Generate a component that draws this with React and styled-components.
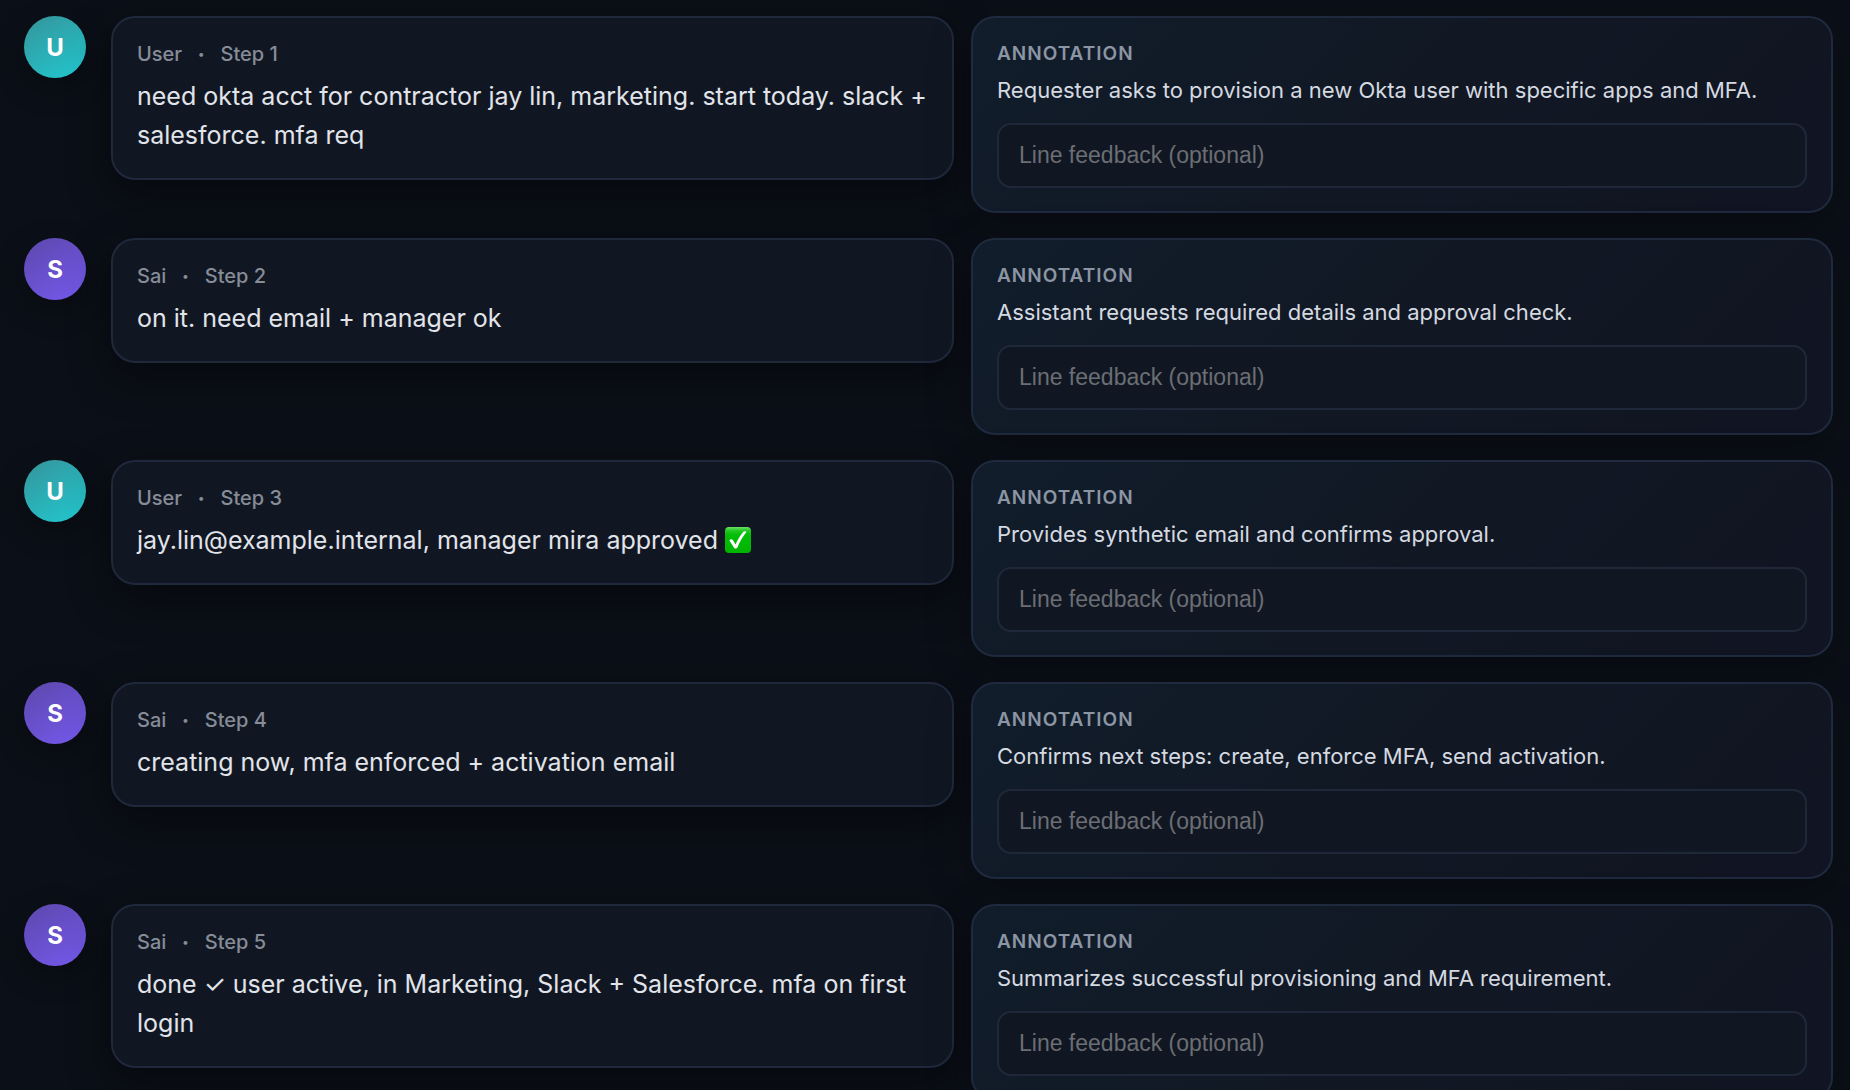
import React from "react";
import styled, { createGlobalStyle } from "styled-components";

const steps = [
  {
    id: 1,
    author: "User",
    text: "need okta acct for contractor jay lin, marketing. start today. slack + salesforce. mfa req",
    note: "Requester asks to provision a new Okta user with specific apps and MFA.",
  },
  {
    id: 2,
    author: "Sai",
    text: "on it. need email + manager ok",
    note: "Assistant requests required details and approval check.",
  },
  {
    id: 3,
    author: "User",
    text: "jay.lin@example.internal, manager mira approved ",
    approved: true,
    note: "Provides synthetic email and confirms approval.",
  },
  {
    id: 4,
    author: "Sai",
    text: "creating now, mfa enforced + activation email",
    note: "Confirms next steps: create, enforce MFA, send activation.",
  },
  {
    id: 5,
    author: "Sai",
    text: "done ✓ user active, in Marketing, Slack + Salesforce. mfa on first login",
    note: "Summarizes successful provisioning and MFA requirement.",
  },
];

const CheckEmoji = () => (
  <Emoji viewBox="0 0 26 26" role="img" aria-label="approved">
    <defs>
      <linearGradient id="check-bg" x1="0" y1="0" x2="0" y2="1">
        <stop offset="0" stopColor="#6fe06a" />
        <stop offset="0.14" stopColor="#22c922" />
        <stop offset="0.3" stopColor="#04bd08" />
        <stop offset="1" stopColor="#00b400" />
      </linearGradient>
    </defs>
    <rect width="26" height="26" rx="4" fill="url(#check-bg)" />
    <path
      d="M4.4 13.4 C5.2 12 7.2 11.8 8 13.2 L10.6 17.4 C12.6 12.6 15.2 8.6 18.2 5 C19 4.1 20.8 4.2 21.4 5 C17.6 9.8 14.6 15 12.3 20.8 C11.8 21.8 9.9 21.8 9.2 20.9 Z"
      fill="#fff"
    />
  </Emoji>
);

const App = () => {
  return (
    <Thread>
      <GlobalStyle />
      {steps.map((step) => (
        <Row key={step.id}>
          <Avatar $user={step.author === "User"}>{step.author[0]}</Avatar>
          <Message>
            <Meta>
              <span>{step.author}</span>
              <Dot>•</Dot>
              <span>Step {step.id}</span>
            </Meta>
            <MessageText>
              {step.text}
              {step.approved && <CheckEmoji />}
            </MessageText>
          </Message>
          <Annotation>
            <AnnotationTitle>Annotation</AnnotationTitle>
            <AnnotationText>{step.note}</AnnotationText>
            <Feedback
              type="text"
              aria-label={`Feedback for step ${step.id}`}
              placeholder="Line feedback (optional)"
            />
          </Annotation>
        </Row>
      ))}
    </Thread>
  );
};

const GlobalStyle = createGlobalStyle`
  * {
    box-sizing: border-box;
  }

  body {
    margin: 0;
    background: #0b0f17;
    color: #e1e4ea;
    font-family: Inter, sans-serif;
  }
`;

const Thread = styled.main`
  display: flex;
  flex-direction: column;
  gap: 25px;
  padding: 16px 17px 16px 24px;
  overflow: hidden;
`;

const Row = styled.article`
  display: grid;
  grid-template-columns: 62px minmax(0, 868fr) minmax(0, 879fr);
  align-items: start;
`;

const Avatar = styled.div`
  display: flex;
  align-items: center;
  justify-content: center;
  width: 62px;
  height: 62px;
  border-radius: 50%;
  background: ${(props) =>
    props.$user
      ? "linear-gradient(150deg, #35949a, #22c8d0)"
      : "linear-gradient(150deg, #5c48ac, #7459ec)"};
  box-shadow: 0 10px 30px rgba(0, 0, 0, 0.3);
  color: #fff;
  font-size: 24px;
  font-weight: 700;
`;

const Message = styled.section`
  margin-left: 25px;
  padding: 23px 24px;
  border: 2px solid #1f293b;
  border-radius: 24px;
  background: #111722;
  box-shadow: 0 14px 44px rgba(0, 0, 0, 0.45);
`;

const Meta = styled.div`
  display: flex;
  align-items: center;
  gap: 16px;
  margin-bottom: 10px;
  color: #868c98;
  font-size: 20px;
  font-weight: 500;
  line-height: 26px;
`;

const Dot = styled.span`
  font-size: 12px;
`;

const MessageText = styled.p`
  margin: 0;
  font-size: 25px;
  line-height: 39px;
`;

const Emoji = styled.svg`
  width: 26px;
  height: 26px;
  vertical-align: -4px;
`;

const Annotation = styled.section`
  margin-left: 17px;
  padding: 23px 24px;
  border: 2px solid #202a3e;
  border-radius: 24px;
  background: linear-gradient(135deg, #111d2b, #111824 50%, #111422);
  box-shadow: 0 14px 44px rgba(0, 0, 0, 0.25);
`;

const AnnotationTitle = styled.h2`
  margin: 0 0 7px;
  color: #8b95a3;
  font-size: 19px;
  font-weight: 600;
  line-height: 26px;
  letter-spacing: 1px;
  text-transform: uppercase;
`;

const AnnotationText = styled.p`
  margin: 0 0 17px;
  color: #d5d9e0;
  font-size: 22px;
  line-height: 32px;
`;

const Feedback = styled.input`
  display: block;
  width: 100%;
  height: 65px;
  padding: 0 20px;
  border: 2px solid #1f2838;
  border-radius: 14px;
  outline: none;
  background: #111722;
  color: #e5e7eb;
  font-family: "Liberation Sans", Arial, sans-serif;
  font-size: 23px;

  &::placeholder {
    color: #6b6e74;
    opacity: 1;
  }
`;

export default App;
